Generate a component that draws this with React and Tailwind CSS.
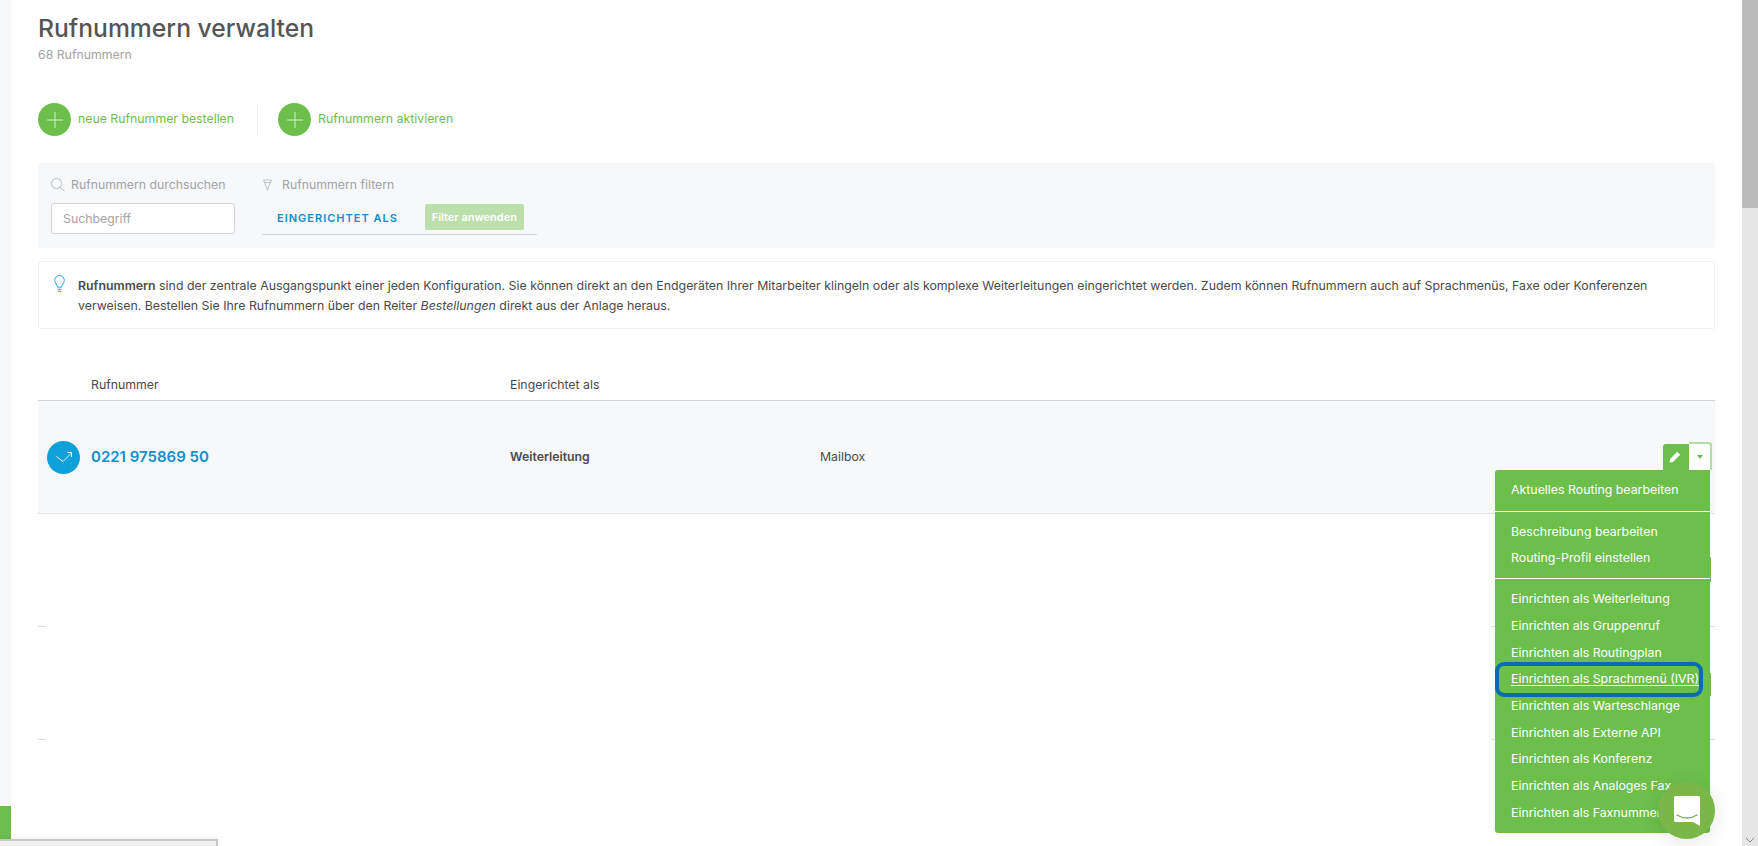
import React from 'react';

const menuGroups = [
  ['Aktuelles Routing bearbeiten'],
  ['Beschreibung bearbeiten', 'Routing-Profil einstellen'],
  [
    'Einrichten als Weiterleitung',
    'Einrichten als Gruppenruf',
    'Einrichten als Routingplan',
    'Einrichten als Sprachmenü (IVR)',
    'Einrichten als Warteschlange',
    'Einrichten als Externe API',
    'Einrichten als Konferenz',
    'Einrichten als Analoges Fax',
    'Einrichten als Faxnummer',
  ],
];

const PlusButton = ({ label }) => (
  <a className="flex items-center gap-[7px] text-[12.3px] text-[#6cbf4b]">
    <span className="flex h-[33px] w-[33px] items-center justify-center rounded-full bg-[#6cbf4b]">
      <svg width="16" height="16" viewBox="0 0 16 16" stroke="#d5edcb" strokeWidth="1">
        <path d="M8 0v16M0 8h16" />
      </svg>
    </span>
    {label}
  </a>
);

const RoutingMenu = () => (
  <div className="absolute left-[1495px] top-[470px] z-10 h-[363px] w-[215px] rounded-b-[3px] rounded-tl-[3px] bg-[#6cbf4b] text-[12.35px] text-white">
    {menuGroups.map((group, i) => (
      <div key={i} className={i > 0 ? 'border-t border-white pb-[6px] pt-[7px]' : 'pb-[7px] pt-[7px]'}>
        {group.map((item) => (
          <div key={item} className="relative flex h-[26.7px] items-center pl-4 whitespace-nowrap">
            <span className={item.includes('IVR') ? 'underline underline-offset-2' : ''}>{item}</span>
            {item.includes('IVR') && (
              <>
                <span className="absolute inset-y-[-4px] left-0 right-[7px] rounded-[9px] border-4 border-[#0b6ab5]" />
                <span className="absolute right-[-1px] top-[7px] h-[23px] w-px bg-[#6cbf4b]" />
              </>
            )}
            {item.includes('Routing-Profil') && (
              <span className="absolute right-[-1px] top-[12px] h-[25px] w-px bg-[#6cbf4b]" />
            )}
          </div>
        ))}
      </div>
    ))}
  </div>
);

const EmptyRow = () => (
  <div className="flex h-[113px] items-end justify-between">
    <div className="h-px w-2 bg-[#dddddd]" />
    <div className="h-px w-[224px] bg-[#dddddd]" />
  </div>
);

export default function App() {
  return (
    <div className="relative flex h-[846px] w-[1758px] overflow-hidden bg-white font-['Inter',sans-serif] text-[#4a4a4a]">
      {/* left strip */}
      <div className="flex w-[11px] shrink-0 flex-col bg-[#f7f8fa] pt-[806px]">
        <div className="h-[33px] bg-[#6cbf4b]" />
      </div>

      <main className="w-[1731px] shrink-0 pl-[27px] pr-[27px]">
        <h1 className="pt-[11px] text-[24.7px] font-medium leading-[34px] text-[#555555]">Rufnummern verwalten</h1>
        <p className="mt-[1px] text-[12.3px] leading-[18px] text-[#a3a3a3]">68 Rufnummern</p>

        <div className="mt-[39px] flex h-[33px] items-center">
          <PlusButton label="neue Rufnummer bestellen" />
          <div className="ml-[23px] mr-[20px] h-full w-px bg-[#eeeeee]" />
          <PlusButton label="Rufnummern aktivieren" />
        </div>

        {/* search + filter */}
        <div className="mt-[27px] flex h-[85px] rounded-[3px] bg-[#f7f8fa] pl-[13px] pt-3">
          <div className="w-[184px]">
            <div className="flex h-5 items-center gap-[6px] whitespace-nowrap text-[12.3px] text-[#a3a3a3]">
              <svg className="shrink-0" width="14" height="14" viewBox="0 0 14 14" fill="none" stroke="#b5b5b5" strokeWidth="0.9">
                <circle cx="5.500" cy="5.500" r="5" />
                <path d="M9 9l4.500 4.500" />
              </svg>
              Rufnummern durchsuchen
            </div>
            <input
              className="mt-2 h-[31px] w-[184px] rounded-[3px] border border-[#d4d4d8] bg-white px-[11px] text-[12.3px] outline-none placeholder:text-[#a3a3a3]"
              placeholder="Suchbegriff"
            />
          </div>
          <div className="ml-[27px] w-[275px]">
            <div className="flex h-5 items-center gap-[10px] whitespace-nowrap pl-px text-[12.3px] text-[#a3a3a3]">
              <svg className="shrink-0" width="9" height="12" viewBox="0 0 9 12" fill="none" stroke="#b5b5b5" strokeWidth="0.8">
                <path d="M0.500 1h8L5.500 8 4.500 11.500 3.500 8zM1.500 3.500h6" />
              </svg>
              Rufnummern filtern
            </div>
            <div className="mt-2 flex h-[32px] items-start border-b border-[#d4d4d8] pl-[15px] pt-px">
              <span className="mt-[6px] whitespace-nowrap text-[11px] font-semibold tracking-[1px] text-[#0f8fcb]">EINGERICHTET ALS</span>
              <button className="ml-[27px] h-[26px] w-[99px] whitespace-nowrap rounded-[2px] bg-[#bbe0ab] text-[11px] font-semibold text-white">
                Filter anwenden
              </button>
            </div>
          </div>
        </div>

        {/* info */}
        <div className="mt-[13px] flex h-[68px] rounded-[3px] border border-[#eeeeee] pl-[15px] pt-[14px] text-[12.35px] leading-5">
          <svg className="mt-[-1px] shrink-0" width="11" height="18" viewBox="0 0 10 17" fill="none" stroke="#1aa3dc" strokeWidth="0.9">
            <path d="M3 11.500C3 9 .5 8 .5 5a4.500 4.500 0 0 1 9 0c0 3-2.500 4-2.500 6.500zM3 13.500h4M3.500 15.500h3" />
          </svg>
          <p className="ml-[13px] w-[1600px]">
            <b className="font-semibold">Rufnummern</b> sind der zentrale Ausgangspunkt einer jeden Konfiguration. Sie können direkt an den Endgeräten Ihrer Mitarbeiter klingeln oder als komplexe Weiterleitungen eingerichtet werden. Zudem können Rufnummern auch auf Sprachmenüs, Faxe oder Konferenzen verweisen. Bestellen Sie Ihre Rufnummern über den Reiter <i>Bestellungen</i> direkt aus der Anlage heraus.
          </p>
        </div>

        {/* table */}
        <div className="mt-[45px] flex h-[27px] border-b border-[#d4d4d8] pt-[2px] text-[12.3px]">
          <span className="ml-[53px] w-[419px]">Rufnummer</span>
          <span>Eingerichtet als</span>
        </div>
        <div className="flex h-[113px] items-center border-b border-[#e2e2e2] bg-[#f7f8fa] pl-[9px]">
          <span className="flex h-[33px] w-[33px] items-center justify-center rounded-full bg-[#0ea0d8]">
            <svg width="16" height="11" viewBox="0 0 16 11" fill="none" stroke="#fff" strokeWidth="0.9">
              <path d="M0.500 4.500L7 9.500L15.500 1M11.500 0.500H15.500V5" />
            </svg>
          </span>
          <span className="ml-[11px] w-[419px] text-[15px] font-semibold text-[#0f8fcb]">0221 975869 50</span>
          <span className="w-[310px] text-[12.3px] font-semibold">Weiterleitung</span>
          <span className="text-[12.3px]">Mailbox</span>
        </div>
        <EmptyRow />
        <EmptyRow />
      </main>

      {/* scrollbar */}
      <div className="flex w-4 flex-col bg-[#e6e6e6]">
        <div className="h-[208px] bg-[#bbbbbb]" />
        <svg className="mb-[2px] ml-[2px] mt-auto" width="12" height="7" viewBox="0 0 12 7" fill="none" stroke="#8a8a8a">
          <path d="M2 1l4 4 4-4" />
        </svg>
      </div>

      {/* row actions */}
      <div className="absolute left-[1663px] top-[444px] flex h-[26px] w-[47px] rounded-tl-[3px] bg-[#6cbf4b]">
        <span className="flex w-[26px] items-center justify-center pr-[2px]">
          <svg width="12" height="12" viewBox="0 0 11 11" fill="#fff">
            <path d="M7.500 0.800l2.700 2.700-6.500 6.500L0.500 10.500 1 7.300z" />
          </svg>
        </span>
        <span className="flex flex-1 items-center justify-center rounded-tr-[2px] bg-white shadow-[1px_-1px_0_1px_#b5dca4]">
          <span className="h-0 w-0 border-x-[3.5px] border-t-[4px] border-x-transparent border-t-[#6cbf4b]" />
        </span>
      </div>

      <RoutingMenu />

      {/* chat launcher */}
      <div className="absolute left-[1658px] top-[782px] z-20 flex h-[57px] w-[57px] items-center justify-center rounded-full bg-[#7ab648] shadow-[0_4px_20px_rgba(0,0,0,0.1)]">
        <svg width="26" height="30" viewBox="0 0 26 30">
          <path d="M1.500 0h23A1.500 1.500 0 0 1 26 1.500V30l-7-4H1.500A1.500 1.500 0 0 1 0 24.500V1.500A1.500 1.500 0 0 1 1.500 0z" fill="#fff" />
          <path d="M3 19c6 4 14 4 20 0" fill="none" stroke="#7ab648" strokeWidth="1.500" strokeLinecap="round" />
        </svg>
      </div>

      {/* bottom bar */}
      <div className="absolute bottom-0 left-0 h-[7px] w-[218px] border-r-2 border-t-2 border-[#c8c8c8] bg-[#f1f1f1] shadow-[0_0_6px_rgba(0,0,0,0.1)]" />
    </div>
  );
}
